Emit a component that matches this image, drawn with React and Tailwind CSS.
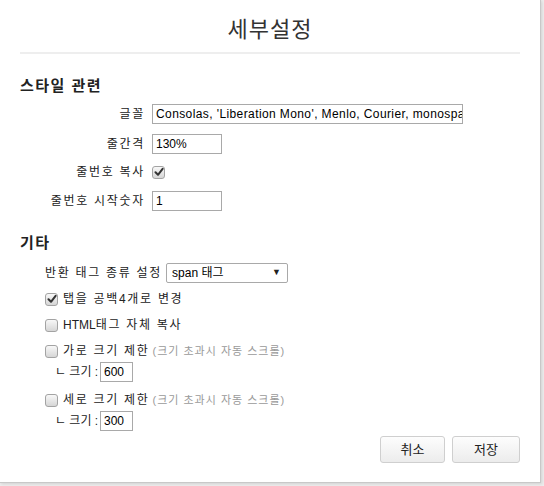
const font = { fontFamily: "'Liberation Sans', 'Noto Sans CJK KR', sans-serif" }

function Check({ checked }) {
  return (
    <span className="inline-flex items-center justify-center w-[13px] h-[13px] shrink-0 rounded-[3px] border border-[#a3a3a3] bg-gradient-to-b from-[#f8f8f8] to-[#d6d6d6]">
      {checked && (
        <svg width="10" height="10" viewBox="0 0 10 10">
          <path d="M1.5 5.2 L4 7.8 L8.6 1.8" fill="none" stroke="#333" strokeWidth="2" strokeLinecap="round" strokeLinejoin="round" />
        </svg>
      )}
    </span>
  )
}

function Field({ value, width, className = '' }) {
  return (
    <div className={`h-[20px] ${width} border border-[#a9a9a9] bg-white pl-[3px] text-[12px] text-black leading-[18px] overflow-hidden whitespace-nowrap ${className}`}>
      {value}
    </div>
  )
}

function Row({ label, children, className = '' }) {
  return (
    <div className={`flex items-center h-[20px] ${className}`}>
      <span className="w-[125px] text-right text-[12px] text-[#222] tracking-[1.7px]">{label}</span>
      <div className="ml-[7px] flex items-center">{children}</div>
    </div>
  )
}

function CheckRow({ checked, label, prefix, hint, className = '' }) {
  return (
    <div className={`flex items-center h-[20px] pl-[25px] ${className}`}>
      <Check checked={checked} />
      <span className="ml-[5px] text-[12px] text-[#222]">
        {prefix}
        <span className="tracking-[1.7px]">{label}</span>
      </span>
      {hint && <span className="ml-[3px] text-[11px] text-[#9a9a9a] tracking-[1px]">{hint}</span>}
    </div>
  )
}

function SizeRow({ value, className = '' }) {
  return (
    <div className={`flex items-center h-[20px] pl-[35px] ${className}`}>
      <span className="text-[12px] text-[#222] w-[45px]">ㄴ 크기 :</span>
      <Field value={value} width="w-[33px]" />
    </div>
  )
}

export default function App() {
  return (
    <div className="w-[544px] h-[486px] bg-[#ededed] overflow-hidden" style={font}>
      <div className="w-[541px] h-[483px] bg-white border-r border-b border-[#c8c8c8] shadow-[1px_1px_3px_rgba(0,0,0,0.12)] px-[20px]">
        {/* Header */}
        <div className="h-[54px] pt-[6px] flex items-center justify-center border-b-2 border-[#eeeeee]">
          <h1 className="text-[22px] text-[#333] tracking-[1px]">세부설정</h1>
        </div>

        {/* 스타일 관련 */}
        <div className="mt-[22px] h-[20px] flex items-center text-[15px] font-bold text-[#222] tracking-[1.5px]">스타일 관련</div>
        <Row label="글꼴" className="mt-[8px]">
          <Field value="Consolas, 'Liberation Mono', Menlo, Courier, monospace" width="w-[311px]" className="tracking-[0.4px]" />
        </Row>
        <Row label="줄간격" className="mt-[10px]">
          <Field value="130%" width="w-[70px]" />
        </Row>
        <Row label="줄번호 복사" className="mt-[8px]">
          <Check checked />
        </Row>
        <Row label="줄번호 시작숫자" className="mt-[9px]">
          <Field value="1" width="w-[70px]" />
        </Row>

        {/* 기타 */}
        <div className="mt-[22px] h-[20px] flex items-center text-[15px] font-bold text-[#222] tracking-[1.5px]">기타</div>
        <div className="mt-[10px] h-[20px] flex items-center pl-[25px]">
          <span className="text-[12px] text-[#222] tracking-[1.7px]">반환 태그 종류 설정</span>
          <div className="ml-[4px] w-[122px] h-[20px] border border-[#a9a9a9] rounded-[2px] bg-white flex items-center justify-between pl-[5px] pr-[6px]">
            <span className="text-[12px] text-black">span 태그</span>
            <span className="text-[9px] text-[#222]">▼</span>
          </div>
        </div>
        <CheckRow checked label="탭을 공백4개로 변경" className="mt-[6px]" />
        <CheckRow prefix="HTML" label="태그 자체 복사" className="mt-[6px]" />
        <CheckRow label="가로 크기 제한" hint="(크기 초과시 자동 스크롤)" className="mt-[6px]" />
        <SizeRow value="600" className="mt-[1px]" />
        <CheckRow label="세로 크기 제한" hint="(크기 초과시 자동 스크롤)" className="mt-[8px]" />
        <SizeRow value="300" className="mt-[1px]" />

        {/* Buttons */}
        <div className="mt-[5px] flex justify-end gap-[7px]">
          <button className="w-[65px] h-[27px] rounded-[3px] border border-[#cfcfcf] bg-gradient-to-b from-[#fdfdfd] to-[#ececec] text-[13px] text-[#222]">취소</button>
          <button className="w-[68px] h-[27px] rounded-[3px] border border-[#cfcfcf] bg-gradient-to-b from-[#fdfdfd] to-[#ececec] text-[13px] text-[#222]">저장</button>
        </div>
      </div>
    </div>
  )
}
